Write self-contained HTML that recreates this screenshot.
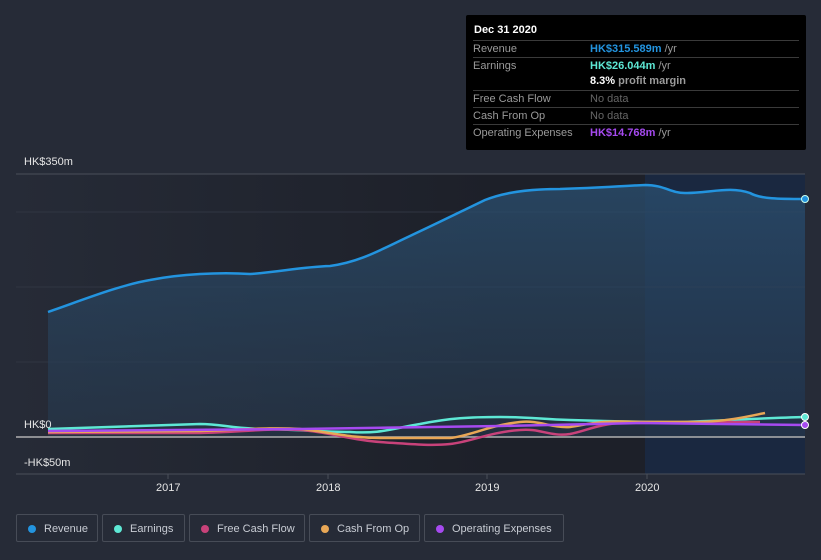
<!DOCTYPE html>
<html><head><style>
body{margin:0;width:821px;height:560px;background:#262b37;font-family:"Liberation Sans",sans-serif;overflow:hidden;position:relative}
.tt{position:absolute;left:466px;top:15px;width:340px;height:135px;background:#000;border-radius:2px}
.tt .h{position:absolute;left:8px;top:9px;color:#fff;font-weight:bold;font-size:11px}
.row{position:absolute;left:7px;width:326px;border-top:1px solid #3a3a3a;font-size:11px;color:#9a9a9a;height:17px;line-height:16px}
.row span{position:absolute;left:117px}
.leg{position:absolute;top:514px;height:28px;border:1px solid #474c57;border-radius:2px;color:#c8ccd4;font-size:11px;line-height:28px;box-sizing:border-box;padding-left:27px}
.leg i{position:absolute;left:11px;top:10px;width:8px;height:8px;border-radius:50%}
.ax{position:absolute;color:#e6e6e6;font-size:11px}
</style></head><body>
<svg width="821" height="560" style="position:absolute;left:0;top:0">
<defs><linearGradient id="bg" x1="0" x2="1"><stop offset="0" stop-color="#262b37"/><stop offset="0.6" stop-color="#1d2029"/><stop offset="1" stop-color="#1d2029"/></linearGradient>
<linearGradient id="rf" x1="0" y1="0" x2="0" y2="1"><stop offset="0" stop-color="#2a4d6d" stop-opacity="0.8"/><stop offset="1" stop-color="#27384c" stop-opacity="0.6"/></linearGradient></defs>
<rect x="16" y="174" width="789" height="300" fill="url(#bg)"/>
<rect x="645" y="174" width="160" height="300" fill="#1a2840"/>
<line x1="16" y1="174" x2="805" y2="174" stroke="#4a4f5a"/>
<g stroke="#303542"><line x1="16" y1="212" x2="805" y2="212"/><line x1="16" y1="287" x2="805" y2="287"/><line x1="16" y1="362" x2="805" y2="362"/></g>
<line x1="16" y1="474" x2="805" y2="474" stroke="#4a4f5a"/>
<path d="M48,312 C80,301 120,285 150,280 C180,274 220,272 250,274 C280,272 300,267 330,266 C360,262 380,250 410,236 C440,222 460,212 485,200 C510,190 540,189 560,189 C600,188 620,186 645,185 C665,185 670,193 685,193 C710,193 730,186 750,193 C760,199 780,199 805,199 L805,437 L48,437Z" fill="url(#rf)"/>
<path d="M48,312 C80,301 120,285 150,280 C180,274 220,272 250,274 C280,272 300,267 330,266 C360,262 380,250 410,236 C440,222 460,212 485,200 C510,190 540,189 560,189 C600,188 620,186 645,185 C665,185 670,193 685,193 C710,193 730,186 750,193 C760,199 780,199 805,199" fill="none" stroke="#2394df" stroke-width="2.5"/>
<line x1="16" y1="437" x2="805" y2="437" stroke="#b0b0b0" stroke-width="1.5"/>
<path d="M48,429 L200,424 C220,424 230,428 260,429 C290,429 320,432 350,432 C380,434 390,429 420,424 C450,418 470,417 500,417 C530,417 540,419 570,420 C600,421 640,422 680,422 C720,421 760,418 805,417" fill="none" stroke="#5ee8d5" stroke-width="2.5"/>
<path d="M48,433 L200,433 C240,432 270,428 300,430 C330,432 350,440 380,442 C410,444 430,446 450,444 C470,442 490,432 520,430 C540,428 550,437 570,434 C590,430 600,422 640,422 L760,422" fill="none" stroke="#c8427a" stroke-width="2.5"/>
<path d="M48,432 L200,431 C240,430 270,427 300,429 C330,432 350,438 380,438 L450,438 C470,436 490,425 520,422 C540,420 550,428 570,427 C590,424 600,420 640,422 L700,422 C730,421 750,416 765,413" fill="none" stroke="#e8a756" stroke-width="2.5"/>
<path d="M48,431 L300,429 L500,426 L640,423 L805,425" fill="none" stroke="#a64af0" stroke-width="2.5"/>
<circle cx="805" cy="199" r="3.5" fill="#2394df" stroke="#cfe" stroke-width="1"/>
<circle cx="805" cy="417" r="3.5" fill="#5ee8d5" stroke="#fff" stroke-width="1"/>
<circle cx="805" cy="425" r="3.5" fill="#a64af0" stroke="#fff" stroke-width="1"/>
<g stroke="#4a4f5a"><line x1="168" y1="474" x2="168" y2="479"/><line x1="328" y1="474" x2="328" y2="479"/><line x1="487" y1="474" x2="487" y2="479"/><line x1="647" y1="474" x2="647" y2="479"/></g>
</svg>
<div class="ax" style="left:24px;top:156px">HK$350m</div>
<div class="ax" style="left:24px;top:419px">HK$0</div>
<div class="ax" style="left:24px;top:457px">-HK$50m</div>
<div class="ax" style="left:156px;top:482px">2017</div>
<div class="ax" style="left:316px;top:482px">2018</div>
<div class="ax" style="left:475px;top:482px">2019</div>
<div class="ax" style="left:635px;top:482px">2020</div>
<div class="tt"><div class="h">Dec 31 2020</div>
<div class="row" style="top:25px">Revenue<span style="color:#2394df;font-weight:bold">HK$315.589m <b style="color:#9a9a9a;font-weight:normal">/yr</b></span></div>
<div class="row" style="top:42px">Earnings<span style="color:#5ee8d5;font-weight:bold">HK$26.044m <b style="color:#9a9a9a;font-weight:normal">/yr</b></span></div>
<div class="row" style="top:58px;border-top:none"><span style="color:#fff;font-weight:bold">8.3% <b style="color:#9a9a9a">profit margin</b></span></div>
<div class="row" style="top:75px">Free Cash Flow<span style="color:#666">No data</span></div>
<div class="row" style="top:92px">Cash From Op<span style="color:#666">No data</span></div>
<div class="row" style="top:109px">Operating Expenses<span style="color:#a64af0;font-weight:bold">HK$14.768m <b style="color:#9a9a9a;font-weight:normal">/yr</b></span></div>
</div>
<div class="leg" style="left:16px;width:82px"><i style="background:#2394df"></i>Revenue</div>
<div class="leg" style="left:102px;width:83px"><i style="background:#5ee8d5"></i>Earnings</div>
<div class="leg" style="left:189px;width:116px"><i style="background:#c8427a"></i>Free Cash Flow</div>
<div class="leg" style="left:309px;width:111px"><i style="background:#e8a756"></i>Cash From Op</div>
<div class="leg" style="left:424px;width:140px"><i style="background:#a64af0"></i>Operating Expenses</div>
</body></html>
